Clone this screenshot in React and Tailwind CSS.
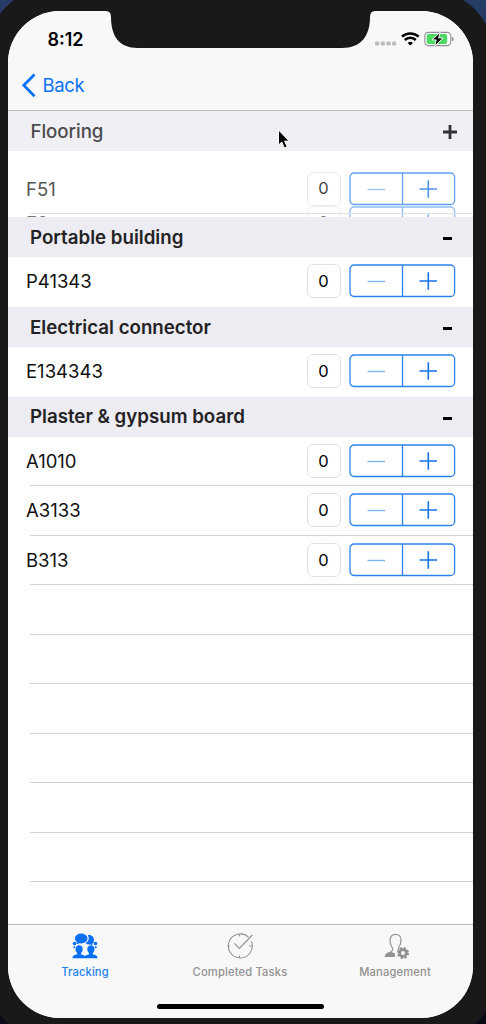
import React from "react";

function Stepper({ faded }) {
  return (
    <div className={"flex items-center " + (faded ? "opacity-75" : "")}>
      <div className="mr-[8.5px] flex h-[34px] w-[34px] items-center justify-center rounded-[6px] border border-[#e2e2e4] bg-white text-[16.5px] leading-none text-black">
        0
      </div>
      <svg width="107" height="34" viewBox="0 0 107 34" fill="none">
        <rect x="1" y="1" width="104.6" height="31.5" rx="4" stroke="#2b82ee" strokeWidth="1.3" />
        <path d="M53.5 1v31.5" stroke="#2b82ee" strokeWidth="1.3" />
        <path d="M18.5 17.5h17.5" stroke="#7db5f3" strokeWidth="1.4" />
        <path d="M70.5 17h17.5M79.3 8.3v17.4" stroke="#1473ee" strokeWidth="1.6" />
      </svg>
    </div>
  );
}

function Row({ label, line }) {
  return (
    <div className="relative flex h-[49.45px] shrink-0 items-center justify-between pb-[1.5px] pl-[18px] pr-[17px]">
      <span className="text-[18.5px] leading-6 tracking-[0px] text-[#111]">{label}</span>
      {label && <Stepper />}
      {line && <div className="absolute bottom-0 left-[22px] right-0 h-px bg-[#d3d3d6]" />}
    </div>
  );
}

function Section({ title }) {
  return (
    <div className="flex h-[40.4px] shrink-0 items-center justify-between bg-[#edecf2] pl-[22px] pr-[21px] pt-px">
      <span className="text-[18.7px] font-semibold leading-6 tracking-[0px] text-[#232325]">{title}</span>
      <div className="mt-[2px] h-[3px] w-[9px] bg-black" />
    </div>
  );
}

function StatusBar() {
  return (
    <div className="flex h-[50px] items-start justify-between pl-[39.5px] pr-[18px]">
      <span className="mt-[17px] text-[18px] font-semibold leading-6 tracking-[0px] text-black">8:12</span>
      <svg className="mt-[19px]" width="80" height="20" viewBox="0 0 80 20">
        <g fill="#bdbdbf">
          <rect x="0" y="11.5" width="4.2" height="4" rx="1.2" />
          <rect x="5.7" y="11.5" width="4.2" height="4" rx="1.2" />
          <rect x="11.4" y="11.5" width="4.2" height="4" rx="1.2" />
          <rect x="17" y="11.5" width="4.2" height="4" rx="1.2" />
        </g>
        <g fill="none" stroke="#000" strokeWidth="2.5">
          <path d="M26.9 6.7a12.3 12.3 0 0 1 16.8 0" />
          <path d="M29.8 10a7.9 7.9 0 0 1 11 0" />
        </g>
        <path d="M35.3 15.6l-2.6-2.7a3.8 3.8 0 0 1 5.2 0z" />
        <rect x="49.8" y="2.4" width="26" height="13.2" rx="3.8" fill="#fff" stroke="#8e8e93" strokeWidth="1.1" />
        <rect x="51.7" y="3.9" width="20.5" height="10.2" rx="2" fill="#4cd964" />
        <path d="M77.1 6.7c2.2.7 2.2 3.9 0 4.6z" fill="#8e8e93" />
        <path d="M65.2 2.2L57 9.9h4.2L59.7 16.2 68.2 8h-4.5z" fill="#000" stroke="#f8f8f8" strokeWidth="1" />
      </svg>
    </div>
  );
}

function TrackingIcon() {
  return (
    <svg width="26" height="26" viewBox="0 0 26 26" fill="#0a70f5">
      <path d="M15.7 2.1c3.8-.9 6.3 1.800 6.3 4.800 0 1.800-.7 3.200-1.800 4l.6 1.500-2.500-.9c-2.400.4-4-.4-4.900-1.400 3.300-1.300 4.300-4.800 2.300-8z" />
      <ellipse cx="9.2" cy="5.5" rx="6.3" ry="5" />
      <path d="M5 8l-.5 3.2L8 10z" />
      <circle cx="2.5" cy="10.6" r="1.8" /><circle cx="2.2" cy="14.2" r="1" />
      <circle cx="23.5" cy="10.6" r="1.8" /><circle cx="23.8" cy="14.2" r="1" />
      <path d="M3.5 16c0-5 7.200-5 7.200 0 0 2-.6 3.200-1.700 4.100v1.200l4 1.500 4-1.500v-1.200c-1.100-.9-1.700-2.100-1.700-4.100 0-5 7.200-5 7.200 0 0 2-.6 3.200-1.700 4.100v1.200c2.500.7 4.700 1 4.700 4H.5c0-3 2.200-3.300 4.700-4v-1.200c-1.100-.9-1.700-2.100-1.700-4.100z" />
    </svg>
  );
}

function TasksIcon() {
  return (
    <svg width="28" height="26" viewBox="0 0 28 26" fill="none" stroke="#929292" strokeWidth="1.05">
      <path d="M22.5 4.2a12 12 0 1 0 2.8 4M13.5 1v2.5M13.5 22.5v2.5M1.5 13h2.500M23 13h2.500" />
      <path d="M8.5 10.3l4.900 5L26.3 2" strokeWidth="1.2" />
    </svg>
  );
}

function ManagementIcon() {
  return (
    <svg className="ml-[3px]" width="26" height="26" viewBox="0 0 26 26" fill="none" stroke="#929292">
      <path d="M7.3 18.2c1.600-.6 1.700-2 1-3.200C6.400 12.200 6 10 6 7c0-7.500 11-7.500 11 0 0 3-.5 5.200-2.400 8-.5 1-.5 1.800.2 2.500" strokeWidth="1.2" />
      <path d="M.7 24c0-3.800 3.800-4.700 6.800-6 .8 1.500 2 2.300 3.200 2l.5 4z" fill="#929292" stroke="none" />
      <circle cx="19" cy="20" r="3.4" strokeWidth="2.8" />
      <circle cx="19" cy="20" r="5.1" strokeWidth="2" strokeDasharray="2.2 1.806" />
    </svg>
  );
}

function Tab({ icon, label, active }) {
  return (
    <div className="flex flex-1 flex-col items-center pr-px pt-[8px]">
      {icon}
      <span className={"mt-[5px] text-[11.2px] font-medium leading-4 tracking-[0.15px] " + (active ? "text-[#2181f2]" : "text-[#929292]")}>
        {label}
      </span>
    </div>
  );
}

export default function App() {
  return (
    <div className="relative h-[1024px] w-[486px] overflow-hidden bg-gradient-to-b from-[#253c66] via-[#18202f] to-[#0b0b18] font-['Inter','Liberation_Sans',sans-serif]">
      <div className="-ml-[10px] -mt-[10px] h-[1046px] w-[504px] rounded-b-[52px] rounded-tl-[56px] rounded-tr-[66px] bg-[#191919] pl-[18px] pt-[21px]">
        <div className="flex h-[1006.5px] w-[465px] flex-col overflow-hidden rounded-[52px] bg-white">
          <div className="flex h-[100px] shrink-0 flex-col border-b border-[#bdbdc0] bg-[#f8f8f8]">
            <StatusBar />
            <div className="flex items-center pl-[13px] pt-[12px] text-[#0a72f5]">
              <svg width="16" height="26" viewBox="0 0 16 26" fill="none" stroke="currentColor" strokeWidth="2.8">
                <path d="M13.5 1.5L2.8 12.3 13.5 23.2" />
              </svg>
              <span className="-mt-[2px] ml-[5.5px] text-[18.5px] leading-6 tracking-[-0.35px]">Back</span>
            </div>
          </div>

          <div className="flex h-[39.5px] shrink-0 items-center justify-between bg-[#efeff4] pl-[22.5px] pr-[16px]">
            <span className="mt-[2px] text-[18.7px] font-medium leading-6 tracking-[-0.05px] text-[#4b4b4d]">Flooring</span>
            <svg width="14" height="14" viewBox="0 0 14 14" className="mt-[3px]" stroke="#333335" strokeWidth="2.8">
              <path d="M0 7h14M7 0v14" />
            </svg>
          </div>

          <div className="h-[66.5px] shrink-0 overflow-hidden pt-[21px]">
            <div className="flex h-[34px] items-center justify-between pl-[18px] pr-[17px]">
              <span className="text-[18.5px] leading-6 tracking-[0px] text-[#555]">F51</span>
              <Stepper faded />
            </div>
            <div className="relative flex h-[34px] items-center justify-between pl-[18px] pr-[17px]">
              <span className="text-[18.5px] leading-6 tracking-[0px] text-[#777]">F2</span>
              <div className="opacity-70"><Stepper faded /></div>
              <div className="absolute left-[22px] right-0 top-[7px] h-px bg-[#e2e2e4]" />
            </div>
          </div>

          <Section title="Portable building" />
          <Row label="P41343" />
          <Section title="Electrical connector" />
          <Row label="E134343" />
          <Section title="Plaster &amp; gypsum board" />
          <Row label="A1010" line />
          <Row label="A3133" line />
          <Row label="B313" line />
          <Row line />
          <Row line />
          <Row line />
          <Row line />
          <Row line />
          <Row line />
          <div className="min-h-0 flex-1" />

          <div className="flex h-[94px] shrink-0 flex-col items-center border-t border-[#b9b9bb] bg-[#f8f8f8]">
            <div className="flex w-full">
              <Tab icon={<TrackingIcon />} label="Tracking" active />
              <Tab icon={<TasksIcon />} label="Completed Tasks" />
              <Tab icon={<ManagementIcon />} label="Management" />
            </div>
            <div className="mt-[24px] h-[5.5px] w-[167px] rounded-full bg-black" />
          </div>
        </div>
      </div>

      <svg className="absolute left-[102px] top-[5px]" width="276" height="44" viewBox="0 0 276 44" fill="#191919">
        <path d="M0 0h276v6h-3q-5 0-5 6c0 19-9 31-28 31H36C17 43 9 31 9 12q0-6-5-6H0z" />
      </svg>
      <svg className="absolute left-[277px] top-[129px]" width="14" height="21" viewBox="0 0 14 21">
        <path d="M1.5 1v15l3.300-3 2.500 6 2.800-1.200-2.500-5.700h4.600z" fill="#000" stroke="#fff" strokeWidth="1" />
      </svg>
    </div>
  );
}
